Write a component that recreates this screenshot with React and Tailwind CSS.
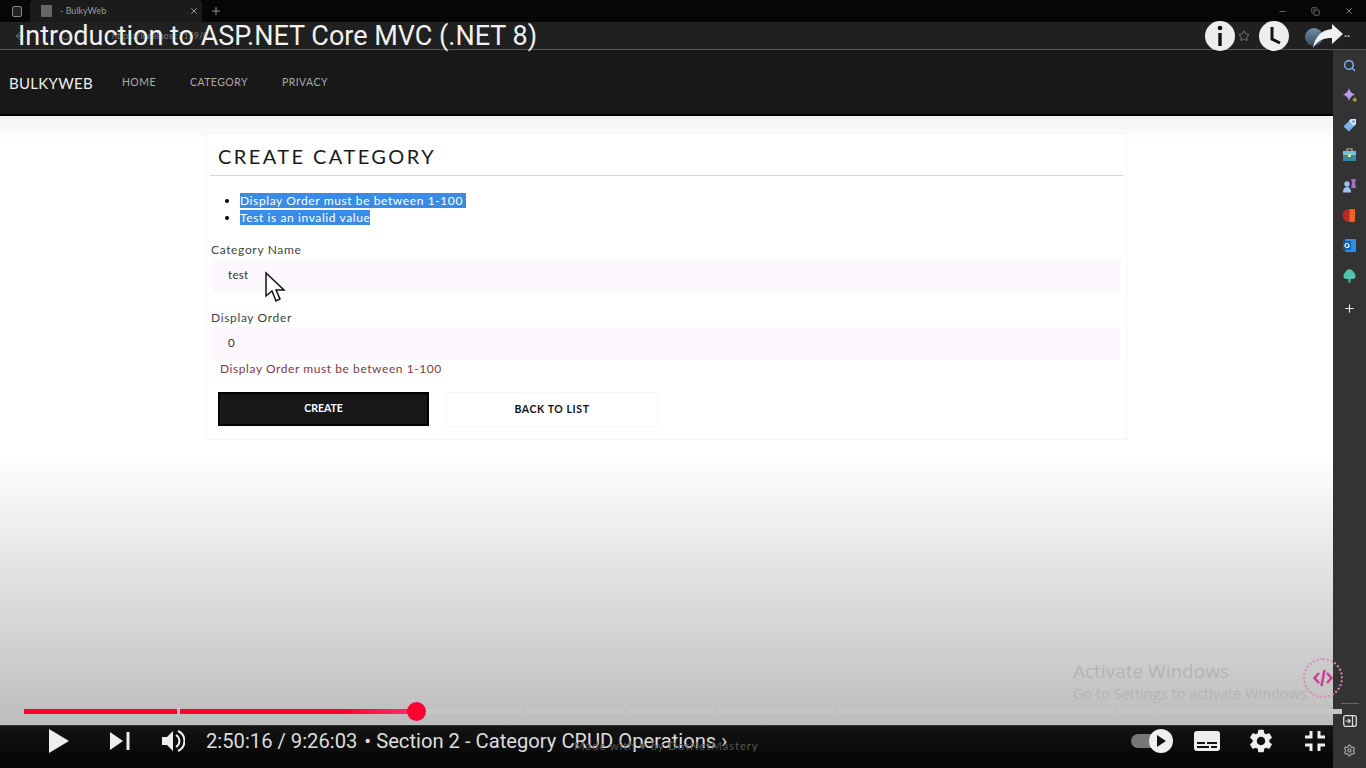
import { ArrowLeft, RotateCw, Plus, Settings, Minus, X, Copy, Star, Search } from 'lucide-react';
import { MdSettings } from 'react-icons/md';

// youtube progress segments
const Progress = () => (
  <div className="absolute left-[24px] top-[709px] flex h-[5px] w-[1318px] gap-[3px]">
    <div className="h-full w-[153px] bg-[#ff0033]" />
    <div className="h-full w-[343px] bg-[#c6c6c6]">
      <div className="h-full w-[237px] bg-gradient-to-r from-[#ff0033] from-70% to-[#ff2a70]" />
    </div>
    <div className="h-full w-[98px] bg-[#c6c6c6]" />
    <div className="h-full w-[88px] bg-[#c6c6c6]" />
    <div className="h-full w-[117px] bg-[#c6c6c6]" />
    <div className="h-full w-[276px] bg-[#c6c6c6]" />
    <div className="h-full w-[36px] bg-[#c6c6c6]" />
    <div className="h-full flex-1 bg-[#c6c6c6]" />
    <div className="absolute left-[383px] top-[-7px] h-[19px] w-[19px] rounded-full bg-[#ff0033]" />
  </div>
);

const Field = ({ label, value, children }) => (
  <div className="flex flex-col">
    <label className="pl-[4px] pt-[1px] text-[12px] leading-[16px] tracking-[0.65px] text-[#444]">{label}</label>
    <div className="mx-[5px] mt-[1px] h-[33px] bg-[#fcf8fd] pl-[16px] pt-[8px] text-[11.500px] leading-[16px] tracking-[0.3px] text-[#333]">
      {value}
    </div>
    {children}
  </div>
);

const SideSlot = ({ children }) => (
  <div className="flex h-[30px] shrink-0 items-center justify-center">{children}</div>
);

const SideIcons = () => (
  <div className="flex w-[33px] flex-col items-center bg-[#333]">
    <SideSlot><Search size={13} strokeWidth={3} className="text-[#7aa7e8]" /></SideSlot>
    <SideSlot>
      <svg width="16" height="16" viewBox="0 0 16 16">
        <path d="M7 1 Q8 6 13 7.500 Q8 9 7 14 Q6 9 1 7.500 Q6 6 7 1z" fill="#b79af0" />
        <path d="M12 10.500h1.500V12H15v1.500h-1.500V15H12v-1.500h-1.500V12H12z" fill="#b8a23c" />
      </svg>
    </SideSlot>
    <SideSlot>
      <svg width="16" height="16" viewBox="0 0 16 16">
        <path d="M9 2 H14 V7 L7 14.500 L1.500 9.500z" fill="#7fb0ee" />
        <path d="M9 2 H14 V7 L12 9 L7 4z" fill="#d6e6fb" />
        <circle cx="11.500" cy="4.500" r="1" fill="#3a5f90" />
      </svg>
    </SideSlot>
    <SideSlot>
      <svg width="15" height="14" viewBox="0 0 15 14">
        <path d="M5 3 V1 H10 V3" fill="none" stroke="#c9a98a" strokeWidth="1.200" />
        <rect x="1" y="3" width="13" height="4" fill="#6fc4d6" />
        <rect x="1" y="7" width="13" height="6" fill="#2f8aa3" />
        <rect x="6" y="6" width="3" height="3" fill="#e8d8a0" />
      </svg>
    </SideSlot>
    <SideSlot>
      <svg width="15" height="15" viewBox="0 0 15 15">
        <circle cx="5" cy="6" r="2.700" fill="#9cc2f5" />
        <path d="M1 14.500c0-4 2-5.500 4-5.500s4 1.500 4 5.500z" fill="#9cc2f5" />
        <path d="M9 1h5l-1 4 1 5H9l1-5z" fill="#a36fc0" />
      </svg>
    </SideSlot>
    <SideSlot>
      <svg width="15" height="15" viewBox="0 0 15 15">
        <circle cx="7" cy="7.500" r="6.500" fill="#b82a2a" />
        <rect x="7.500" y="1" width="5.500" height="13" rx="1" fill="#e8662a" />
      </svg>
    </SideSlot>
    <SideSlot>
      <svg width="15" height="15" viewBox="0 0 15 15">
        <rect x="3" y="1" width="11" height="13" rx="1" fill="#2f8fe0" />
        <rect x="1" y="3" width="8" height="9" rx="1" fill="#0f5fa8" />
        <circle cx="5" cy="7.500" r="2" fill="none" stroke="#fff" strokeWidth="1.200" />
      </svg>
    </SideSlot>
    <SideSlot>
      <svg width="15" height="15" viewBox="0 0 15 15">
        <path d="M7.500 1 C11 2 13 5 13.500 8 Q14 11 10 11 H5 Q1 11 1.500 8 C2 5 4 2 7.500 1z" fill="#52c4ae" />
        <rect x="6.500" y="10" width="2" height="4.500" fill="#52c4ae" />
      </svg>
    </SideSlot>
    <div className="mt-[3px]">
      <SideSlot><Plus size={13} className="text-[#e8e8e8]" /></SideSlot>
    </div>
    <div className="mt-auto mb-[11px] flex flex-col items-center">
      <div className="mb-[11px] h-px w-[18px] bg-[#666]" />
      <svg width="14" height="12" viewBox="0 0 14 12">
        <rect x="0.700" y="0.700" width="12.600" height="10.600" rx="2" fill="none" stroke="#ddd" strokeWidth="1.300" />
        <path d="M9.500 1 V11 M2.500 6 H7 M5.200 4 L7.200 6 L5.200 8" fill="none" stroke="#ddd" strokeWidth="1.200" />
      </svg>
      <Settings size={13} className="mt-[17px] text-[#aaa]" />
    </div>
  </div>
);

export default function App() {
  return (
    <div className="relative h-[768px] w-[1366px] overflow-hidden bg-black font-['Lato',sans-serif]">
      {/* browser chrome */}
      <div className="flex h-[22px] items-center bg-[#060606] pl-[12px] text-[#aaa]">
        <div className="h-[11px] w-[10px] rounded-[2px] border border-[#888] bg-[#222]" />
        <div className="ml-[8px] flex h-[22px] w-[172px] items-center rounded-t-[4px] bg-[#1b1b1b] pl-[11px] pr-[3px]">
          <div className="h-[12px] w-[11px] rounded-[1px] bg-[#666]" />
          <span className="ml-[8px] text-[9px] text-[#999]">- BulkyWeb</span>
          <X size={10} className="ml-auto text-[#aaa]" />
        </div>
        <Plus size={12} className="ml-[8px] text-[#999]" />
        <div className="ml-auto flex items-center gap-[24px] pr-[12px] text-[#888]">
          <Minus size={9} />
          <Copy size={9} />
          <X size={10} />
        </div>
      </div>
      <div className="flex h-[28px] items-center border-b border-[#555] bg-[#202020] pl-[14px] text-[#777]">
        <ArrowLeft size={12} />
        <RotateCw size={11} className="ml-[34px]" />
        <span className="ml-[41px] text-[9px]">https://localhost:7159/C</span>
        <Star size={12} className="ml-auto mr-[116px]" />
      </div>

      <div className="flex h-[718px]">
        <div className="flex w-[1333px] flex-col">
          {/* app navbar */}
          <nav className="flex h-[66px] shrink-0 items-center border-b-2 border-black bg-[#181818] pl-[9px] pt-[2px]">
            <span className="text-[15px] tracking-[0.28px] text-[#eee]">BULKYWEB</span>
            <div className="ml-[29px] flex gap-[34px] text-[10.500px] tracking-[0.45px] text-[#aaa]">
              <span>HOME</span>
              <span>CATEGORY</span>
              <span>PRIVACY</span>
            </div>
          </nav>

          {/* page */}
          <main className="flex-1 bg-[linear-gradient(to_bottom,#f3f3f5_0%,#ffffff_4%,#ffffff_52%,#b4b4b4_99%)] pt-[17px]">
            <div className="ml-[206px] h-[307px] w-[921px] border border-[#f5f5f5] bg-white">
              <div className="mx-[3px] flex h-[42px] items-center border-b border-[#d8d8d8] pl-[8px] pt-[2px]">
                <h2 className="text-[20px] tracking-[2.430px] text-[#1a1a1a]">CREATE CATEGORY</h2>
              </div>
              <ul className="ml-[33px] mt-[16px] list-disc pl-0 text-[12px] leading-[17px] tracking-[0.6px] text-white marker:text-black">
                <li><span className="bg-[#3b8ae6] pr-[3px]">Display Order must be between 1-100</span></li>
                <li><span className="bg-[#3b8ae6]">Test is an invalid value</span></li>
              </ul>
              <div className="mt-[15px] flex flex-col gap-[17px]">
                <Field label="Category Name" value="test" />
                <Field label="Display Order" value="0">
                  <span className="pl-[13px] pt-[1px] text-[12px] leading-[16px] tracking-[0.57px] text-[#803a4c]">
                    Display Order must be between 1-100
                  </span>
                </Field>
              </div>
              <div className="ml-[11px] mt-[15px] flex gap-[17px]">
                <button className="flex h-[34px] w-[211px] items-center justify-center border-2 border-black bg-[#181818] text-[10.500px] font-bold text-white">
                  CREATE
                </button>
                <button className="flex h-[35px] w-[212px] items-center justify-center border border-[#f7f7f7] bg-white text-[10.500px] font-bold tracking-[0.6px] text-[#111]">
                  BACK TO LIST
                </button>
              </div>
            </div>
          </main>
        </div>
        <SideIcons />
      </div>

      {/* video player overlay */}
      <div className="absolute left-[18px] top-[20px] font-['Roboto',sans-serif] text-[27px] leading-[32px] text-[#f1f1f1]">
        Introduction to ASP.NET Core MVC (.NET 8)
      </div>
      <div className="absolute left-[1205px] top-[21px] flex h-[30px] w-[30px] items-center justify-center rounded-full bg-[#eee]">
        <svg width="8" height="22" viewBox="0 0 8 22"><circle cx="4" cy="3" r="2.300" fill="#111" /><rect x="2.300" y="8" width="3.400" height="13" fill="#111" /></svg>
      </div>
      <div className="absolute left-[1259px] top-[21px] flex h-[30px] w-[30px] items-center justify-center rounded-full bg-[#eee]">
        <svg width="30" height="30" viewBox="0 0 30 30"><path d="M13 6v12l8 4" fill="none" stroke="#111" strokeWidth="3" /></svg>
      </div>
      <div className="absolute left-[1305px] top-[28px] h-[18px] w-[18px] rounded-full bg-gradient-to-b from-[#6f90ab] to-[#3a4a5c]" />
      <svg className="absolute left-[1312px] top-[23px]" width="32" height="26" viewBox="0 0 32 26">
        <path d="M20 1 L31 11 L20 21 V15 C12 15 6 17 1 25 C3 14 9 7 20 6z" fill="#f1f1f1" />
      </svg>
      <div className="absolute left-[1344px] top-[29px] text-[12px] leading-[14px] text-[#ccc]">··</div>

      {/* mouse cursor */}
      <svg className="absolute left-[264px] top-[271px]" width="23" height="33" viewBox="0 0 23 33">
        <path d="M2 2 V25 L8 20 L12 30 L16 28 L12 19 L20 19z" fill="#fff" stroke="#111" strokeWidth="1.500" />
      </svg>

      {/* watermark */}
      <div className="absolute left-[1073px] top-[659px] font-['Open_Sans',sans-serif] text-[19px] leading-[24px] text-[#b4b4b4]">Activate Windows</div>
      <div className="absolute left-[1073px] top-[685px] font-['Open_Sans',sans-serif] text-[14.500px] leading-[18px] text-[#b4b4b4]">Go to Settings to activate Windows.</div>
      <div className="absolute left-[1303px] top-[658px] flex h-[40px] w-[40px] items-center justify-center rounded-full border-2 border-dotted border-[#d58ab8] text-[#cc3d96]">
        <svg width="20" height="18" viewBox="0 0 20 18"><path d="M6 4 L1.500 9 L6 14 M14 4 L18.500 9 L14 14 M11.500 1 L8.500 17" fill="none" stroke="currentColor" strokeWidth="2.500" /></svg>
      </div>

      <Progress />

      {/* player controls */}
      <div className="absolute bottom-0 left-0 flex h-[43px] w-[1333px] items-center border-t border-[#333] bg-gradient-to-b from-[#141414] to-[#050505] pb-[12px] font-['Roboto',sans-serif]">
        <svg className="ml-[49px]" width="20" height="26" viewBox="0 0 20 26"><path d="M0 1 L20 13 L0 25z" fill="#eee" /></svg>
        <svg className="ml-[41px]" width="20" height="18" viewBox="0 0 20 18"><path d="M0 0 L13 9 L0 18z M16.500 0 H19.500 V18 H16.500z" fill="#eee" /></svg>
        <svg className="ml-[31px]" width="24" height="22" viewBox="0 0 24 22"><path d="M1 7 H6 L12 1 V21 L6 15 H1z" fill="#eee" /><path d="M15 5 A7 7 0 0 1 15 17 M17 1 A11 11 0 0 1 17 21" fill="none" stroke="#eee" strokeWidth="2" /></svg>
        <span className="ml-[21px] whitespace-nowrap text-[20.200px] leading-[24px] text-[#ddd]">2:50:16 / 9:26:03</span>
        <span className="ml-[7px] whitespace-nowrap text-[20.200px] leading-[24px] text-[#ddd]">• Section 2 - Category CRUD Operations ›</span>
        <div className="ml-auto flex items-center pr-[7px]">
          <div className="relative h-[14px] w-[28px] rounded-full bg-[#777]">
            <div className="absolute left-[18px] top-[-5px] flex h-[24px] w-[24px] items-center justify-center rounded-full bg-[#eee]">
              <svg width="10" height="12" viewBox="0 0 10 12"><path d="M1 0 L10 6 L1 12z" fill="#111" /></svg>
            </div>
          </div>
          <div className="ml-[35px] flex h-[20px] w-[26px] flex-col justify-end gap-[2px] rounded-[3px] bg-[#eee] px-[3px] pb-[3px]">
            <div className="flex gap-[2px]"><div className="h-[2px] w-[8px] bg-[#111]" /><div className="h-[2px] flex-1 bg-[#111]" /></div>
            <div className="flex gap-[2px]"><div className="h-[2px] flex-1 bg-[#111]" /><div className="h-[2px] w-[6px] bg-[#111]" /></div>
          </div>
          <MdSettings size={28} className="ml-[27px] text-[#eee]" />
          <svg className="ml-[29px]" width="22" height="22" viewBox="0 0 22 22"><path d="M1 7 H7 V1 M15 1 V7 H21 M1 15 H7 V21 M21 15 H15 V21" fill="none" stroke="#eee" strokeWidth="3" /></svg>
        </div>
      </div>
      <div className="absolute left-[574px] top-[738px] text-[11.500px] leading-[16px] tracking-[0.85px] text-[#555]">Made with ♥ by DotNetMastery</div>
    </div>
  );
}
